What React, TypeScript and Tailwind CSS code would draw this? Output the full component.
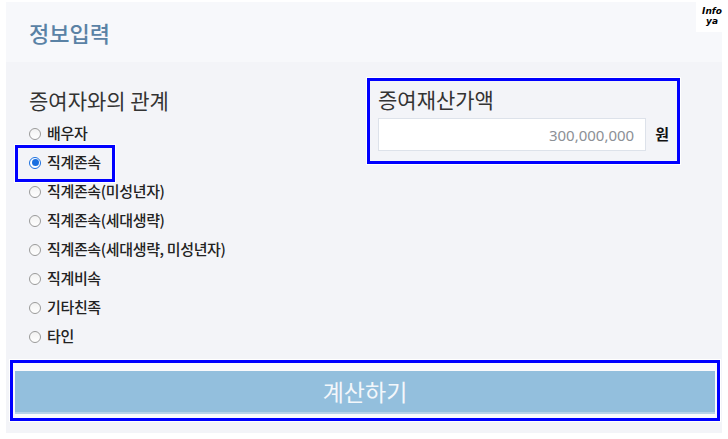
import React, { useState } from 'react';

const relations = [
  '배우자',
  '직계존속',
  '직계존속(미성년자)',
  '직계존속(세대생략)',
  '직계존속(세대생략, 미성년자)',
  '직계비속',
  '기타친족',
  '타인',
];

const font = { fontFamily: '"Noto Sans CJK KR", "Noto Sans", sans-serif' };

const Radio: React.FC<{ checked: boolean }> = ({ checked }) =>
  checked ? (
    <span className="flex h-[12px] w-[12px] items-center justify-center rounded-full border border-[#1a6fe0] bg-white">
      <span className="h-[7px] w-[7px] rounded-full bg-[#1a6fe0]" />
    </span>
  ) : (
    <span className="h-[12px] w-[12px] rounded-full border border-[#9a9a9a] bg-gradient-to-b from-[#f2f2f2] to-white" />
  );

const App: React.FC = () => {
  const [selected, setSelected] = useState(1);

  return (
    <div className="relative h-[439px] w-[728px] overflow-hidden bg-white px-[6px] pt-[2px]" style={font}>
      <div className="absolute right-0 top-0 flex h-[32px] w-[32px] flex-col items-center justify-center bg-white text-[9px] font-bold italic leading-[10px] text-black [font-family:'DejaVu_Sans',sans-serif]">
        <span>Info</span>
        <span>ya</span>
      </div>

      <div className="flex h-[431px] w-[716px] flex-col">
        <div className="flex h-[60px] items-center bg-[#f7f8fb] px-[23px] text-[22px] font-medium text-[#5a82a5]">
          정보입력
        </div>

        <div className="flex flex-1 flex-col bg-[#f3f4f8]">
          <div className="flex">
            <div className="w-[361px] pl-[23px] pt-[24px]">
              <div className="h-[28px] text-[21px] leading-[28px] text-[#333]">증여자와의 관계</div>
              <div className="mt-[5px] flex flex-col">
                {relations.map((r, i) => (
                  <label
                    key={r}
                    onClick={() => setSelected(i)}
                    className="relative flex h-[29px] cursor-pointer items-center gap-[6px] text-[15px] font-medium tracking-[-0.35px] text-[#222]"
                  >
                    <Radio checked={selected === i} />
                    <span>{r}</span>
                    {i === 1 && (
                      <span className="pointer-events-none absolute left-[-14px] top-[-3px] h-[37px] w-[100px] border-[3px] border-[#0000ff] shadow-[0_0_0_1px_white]" />
                    )}
                  </label>
                ))}
              </div>
            </div>

            <div className="mt-[16px] h-[86px] w-[313px] border-[3px] border-[#0000ff] px-[8px] pt-[4px] shadow-[0_0_0_1px_white]">
              <div className="h-[28px] text-[21px] leading-[28px] text-[#333]">증여재산가액</div>
              <div className="mt-[5px] flex items-center">
                <input
                  className="h-[33px] w-[270px] border border-[#dde2ea] bg-white pr-[11px] text-right text-[15px] text-[#333] outline-none placeholder:text-[#8c9096] [font-family:'Noto_Sans',sans-serif]"
                  placeholder="300,000,000"
                />
                <span className="ml-[9px] text-[15px] font-bold text-[#111]">원</span>
              </div>
            </div>
          </div>

          <div className="ml-[4px] mt-[9px] h-[61px] w-[710px] border-[3px] border-[#0000ff] bg-[#fafafc] px-[2px] pb-[4px] pt-[8px] shadow-[0_0_0_1px_white]">
            <button className="flex h-full w-full items-center justify-center border-b-2 border-[#b7d3e8] bg-[#93bfdd] text-[23px] text-[#f3f7fb]">
              계산하기
            </button>
          </div>
        </div>
      </div>
    </div>
  );
};

export default App;
